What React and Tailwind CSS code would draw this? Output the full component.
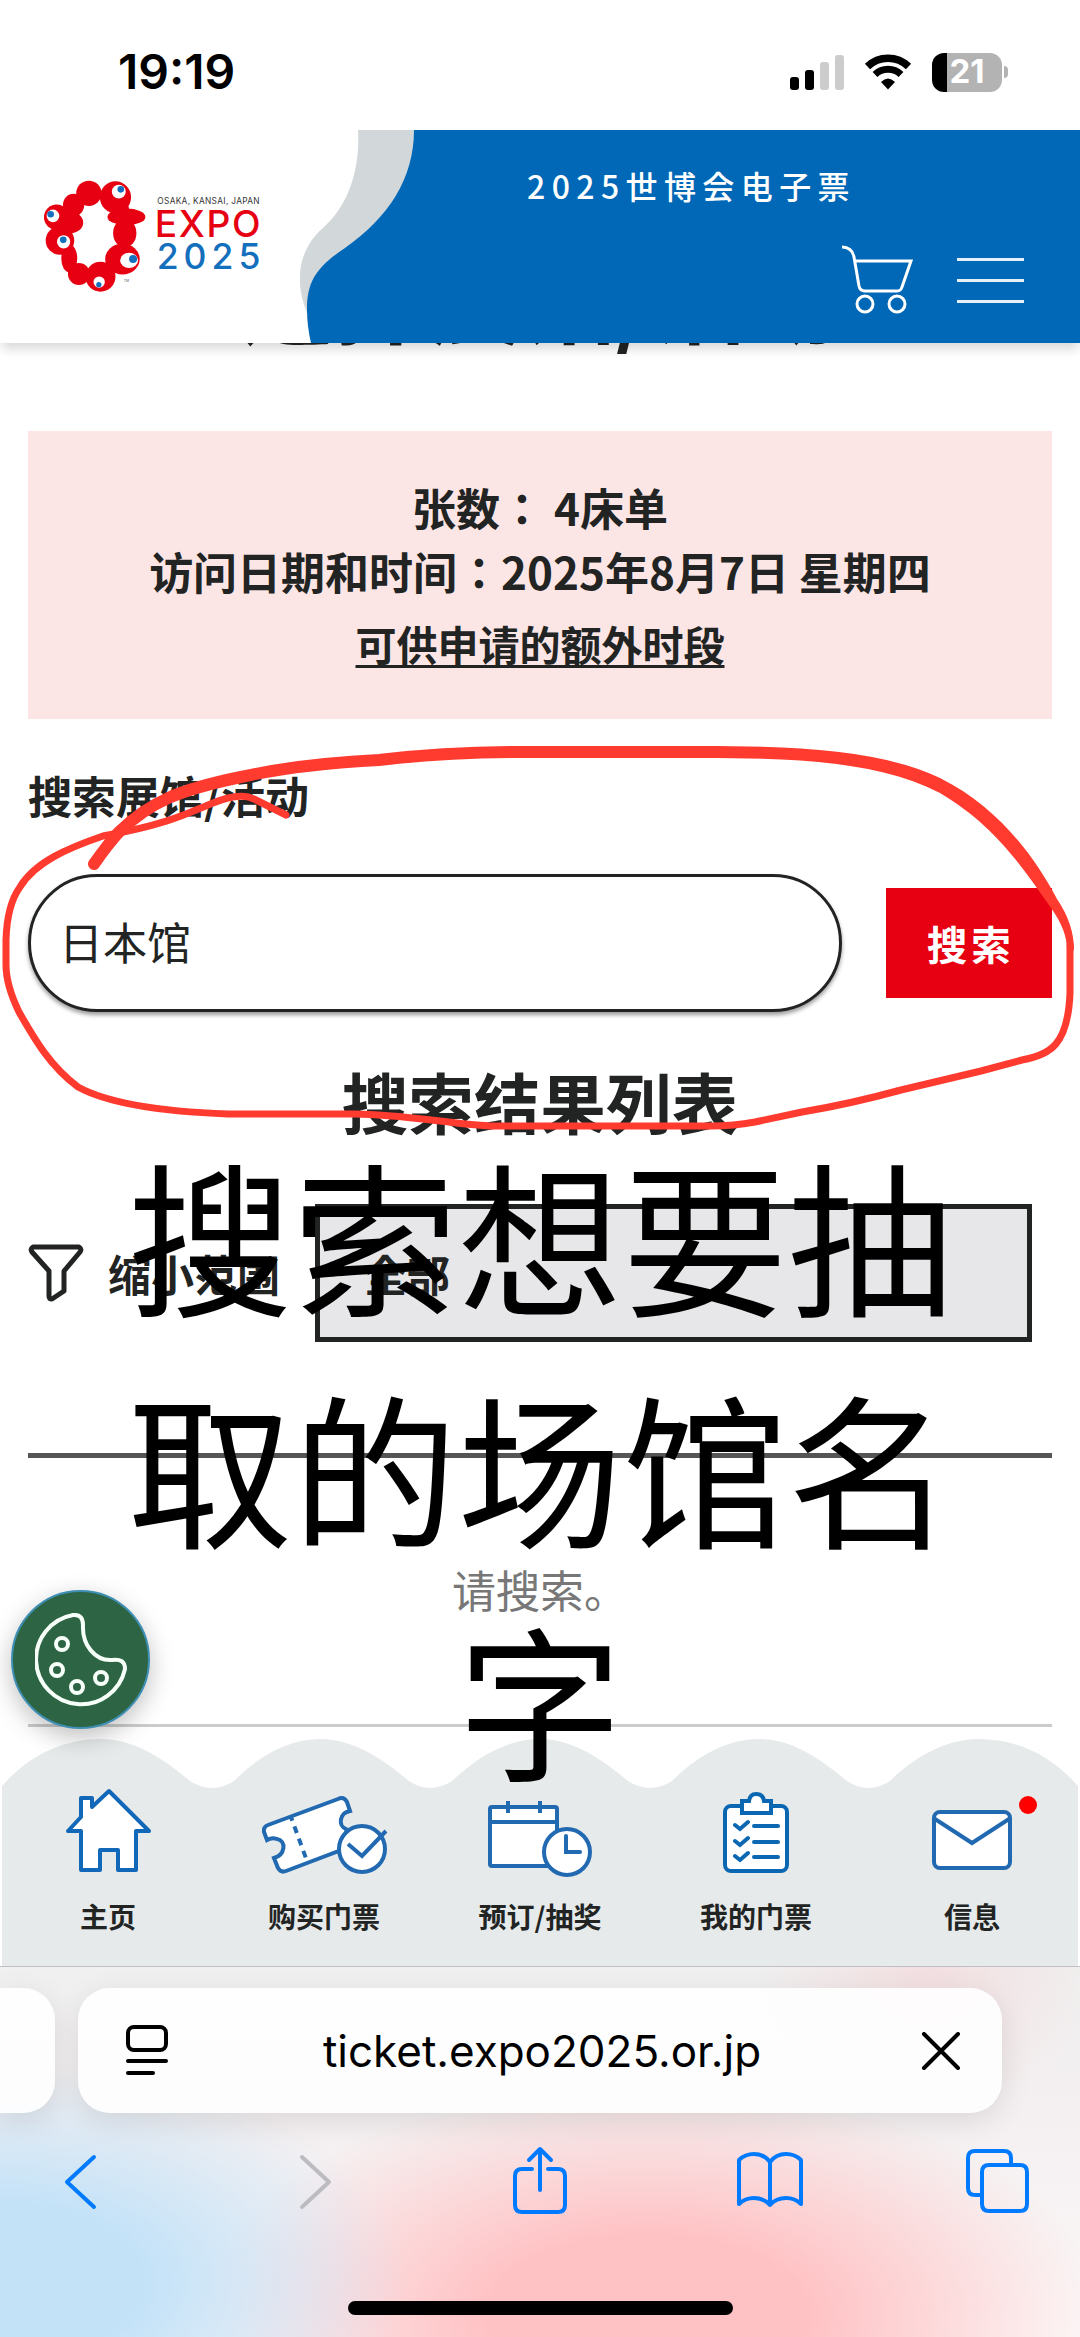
import React, { useState } from "react";

const Signal = () => (
  <svg width="54" height="35" viewBox="0 0 54 35" aria-hidden="true">
    <rect x="0" y="22" width="9" height="13" rx="3" fill="#000" />
    <rect x="15" y="15" width="9" height="20" rx="3" fill="#000" />
    <rect x="30" y="7" width="9" height="28" rx="3" fill="#ccc" />
    <rect x="45" y="0" width="9" height="35" rx="3" fill="#ccc" />
  </svg>
);

const Wifi = () => (
  <svg width="48" height="36" viewBox="0 0 48 36" fill="none" stroke="#000" aria-hidden="true">
    <path d="M3.5 12.5 A29.5 29.5 0 0 1 44.5 12.5" strokeWidth="7.5" />
    <path d="M11 20.5 A19 19 0 0 1 37 20.5" strokeWidth="7" />
    <path d="M24 35.5 L17 28 Q24 21 31 28 Z" fill="#000" stroke="none" />
  </svg>
);

const Logo = () => (
  <svg width="230" height="113" viewBox="40 30 690 340" role="img" aria-label="EXPO 2025">
    <g fill="#e60012">
      <circle cx="177" cy="70" r="38" />
      <ellipse cx="257" cy="82" rx="47" ry="48" />
      <ellipse cx="290" cy="141" rx="57" ry="25" />
      <ellipse cx="270" cy="120" rx="28" ry="26" />
      <ellipse cx="285" cy="190" rx="35" ry="43" />
      <ellipse cx="278" cy="268" rx="52" ry="46" />
      <circle cx="212" cy="321" r="45" />
      <circle cx="147" cy="313" r="33" />
      <ellipse cx="118" cy="266" rx="24" ry="42" />
      <circle cx="90" cy="212" r="43" />
      <circle cx="80" cy="142" r="38" />
      <ellipse cx="131" cy="105" rx="32" ry="34" />
      <ellipse cx="122" cy="158" rx="38" ry="32" />
    </g>
    <g fill="#fff">
      <circle cx="267" cy="65" r="21" />
      <circle cx="69" cy="138" r="19" />
      <circle cx="101" cy="216" r="20" />
      <ellipse cx="298" cy="272" rx="27" ry="23" />
      <circle cx="208" cy="337" r="17" />
    </g>
    <g fill="#1470bd">
      <circle cx="273" cy="58" r="10" />
      <circle cx="62" cy="133" r="10" />
      <circle cx="100" cy="210" r="10" />
      <circle cx="310" cy="268" r="12" />
      <circle cx="207" cy="345" r="8" />
    </g>
    <g fontFamily="Inter, sans-serif">
      <text x="383" y="102" fontSize="25" letterSpacing="1" fill="#333">OSAKA, KANSAI, JAPAN</text>
      <text x="375" y="201" fontSize="112" fontWeight="500" letterSpacing="5" fill="#e60012">EXPO</text>
      <text x="381" y="297" fontSize="107" fontWeight="500" letterSpacing="15" fill="#1470bd">2025</text>
      <text x="282" y="336" fontSize="10" fill="#555">TM</text>
    </g>
  </svg>
);

const HeaderWave = () => (
  <svg className="h-full w-[120px] shrink-0" viewBox="300 130 120 213" preserveAspectRatio="none" aria-hidden="true">
    <path d="M358 130 C360 160 353 202 323 228 C302 246 292 276 307 313 L340 313 L420 200 L420 130 Z" fill="#d2d7d9" />
    <path d="M414 130 C414 178 389 217 345 248 C318 266 307 280 307 309 Q307 326 311 343 L421 343 L421 130 Z" fill="#0068b7" />
  </svg>
);

const Cart = () => (
  <svg width="72" height="70" viewBox="0 0 72 70" fill="none" stroke="#fff" strokeWidth="3" aria-hidden="true">
    <path d="M1 2 Q11 2 13 12 L18 41 Q19 46 24 46 L56 46 Q60 46 61 42 L70 16 L14 16" />
    <circle cx="24" cy="59" r="8" />
    <circle cx="56" cy="59" r="8" />
  </svg>
);

const Home = () => (
  <svg width="130" height="90" viewBox="0 0 130 90" fill="#fff" stroke="#1168b8" strokeWidth="4" strokeLinejoin="round" aria-hidden="true">
    <path d="M66 4 L106 44 H93 V83 H75 V63 H57 V83 H38 V44 H25 L38 30 V11 H49 V20 Z" />
  </svg>
);

const Ticket = () => (
  <svg width="130" height="90" viewBox="0 0 130 90" fill="#fff" stroke="#2169b0" strokeWidth="4" aria-hidden="true">
    <path d="M9 38 L79 12 Q85 9 88 15 L91 24 C80 26 79 39 87 42 L92 62 L80 64 L27 84 Q22 86 19 81 L15 71 C26 68 28 54 18 52 Q13 50 8 53 L5 45 Q4 40 9 38 Z" />
    <path d="M32 30 L48 74" strokeDasharray="7 6" strokeDashoffset="3" />
    <circle cx="103" cy="62" r="23" />
    <path d="M89 57 L103 69 L127 44" fill="none" />
  </svg>
);

const Booking = () => (
  <svg width="130" height="90" viewBox="0 0 130 90" fill="#fff" stroke="#2169b0" strokeWidth="4" aria-hidden="true">
    <rect x="15" y="20" width="67" height="59" rx="2" />
    <path d="M15 35 H82 M33 14 V26 M65 14 V26" />
    <circle cx="92" cy="65" r="23" />
    <path d="M91 49 V65 H105" fill="none" strokeLinecap="round" />
  </svg>
);

const Clipboard = () => (
  <svg width="130" height="90" viewBox="0 0 130 90" fill="#fff" stroke="#0b67b2" strokeWidth="4" aria-hidden="true">
    <rect x="34" y="19" width="62" height="65" rx="6" />
    <path d="M51 26 V14 H58 Q59 7 65 7 Q72 7 73 14 H80 V26 Z" />
    <path d="M44 38 L49 42 L57 35 M44 54 L49 58 L57 51 M44 69 L49 73 L57 66 M63 39 H87 M63 55 H87 M63 70 H87" strokeLinecap="round" fill="none" />
  </svg>
);

const Mail = () => (
  <svg width="130" height="90" viewBox="0 0 130 90" fill="#fff" stroke="#2169b0" strokeWidth="4" aria-hidden="true">
    <rect x="27" y="25" width="76" height="56" rx="6" />
    <path d="M28 32 L65 56 L102 32" fill="none" />
  </svg>
);

const navItems = [
  { name: "主页", icon: <Home /> },
  { name: "购买门票", icon: <Ticket /> },
  { name: "预订/抽奖", icon: <Booking /> },
  { name: "我的门票", icon: <Clipboard /> },
  { name: "信息", icon: <Mail />, unread: true },
];

const toolItems = [
  { name: "返回", color: "text-[#007aff]", d: "M46 11 L19 36 L46 61" },
  { name: "前进", color: "text-[#bcbcc0]", d: "M24 11 L51 36 L24 61" },
  { name: "共享", color: "text-[#007aff]", d: "M25 23 H15 Q8 23 8 30 V59 Q8 66 15 66 H51 Q58 66 58 59 V30 Q58 23 51 23 H41 M33 44 V4 M22 14 L33 3 L44 14" },
  { name: "书签", color: "text-[#007aff]", d: "M33 16 Q27 8 17 8 Q8 8 2 14 V58 Q8 52 17 52 Q27 52 33 59 Q39 52 49 52 Q58 52 64 58 V14 Q58 8 49 8 Q39 8 33 16 V59" },
  { name: "标签页", color: "text-[#007aff]", d: "M16 49 H9 Q2 49 2 42 V12 Q2 5 9 5 H38 Q45 5 45 12 V19 M23 19 H54 Q61 19 61 26 V58 Q61 65 54 65 H23 Q16 65 16 58 V26 Q16 19 23 19 Z" },
];

export default function App() {
  const [keyword, setKeyword] = useState("日本馆");

  return (
    <div className="flex min-h-screen flex-col overflow-hidden bg-white font-['Noto_Sans_CJK_JP','Noto_Sans_CJK_SC',sans-serif] text-[#222424]">
      {/* STATUS BAR */}
      <div className="flex h-[130px] items-center justify-between pt-3.5 pr-[72px] pl-[118px] font-['Inter',sans-serif] text-black">
        <span className="text-[48px] font-semibold">19:19</span>
        <div className="flex items-center gap-5">
          <Signal />
          <Wifi />
          <div className="flex items-center gap-0.5">
            <div className="flex h-[39px] w-[70px] items-center justify-center rounded-xl bg-linear-to-r from-black from-22% to-[#b3b3b3] to-22% text-[33px] font-bold text-white">
              21
            </div>
            <div className="h-3 w-1 rounded-r-full bg-[#b3b3b3]" />
          </div>
        </div>
      </div>

      {/* SITE HEADER */}
      <header className="relative z-10 flex h-[213px] bg-white shadow-[0_8px_10px_-2px_rgba(0,0,0,0.15)]">
        <a href="#top" className="flex w-[300px] shrink-0 items-center pl-[43px]">
          <Logo />
        </a>
        <HeaderWave />
        <div className="flex flex-1 flex-col justify-between bg-[#0068b7] pr-14 pb-7">
          <p className="mt-8 pl-[107px] text-[32px] leading-[46px] font-medium tracking-[0.2em] text-white">2025世博会电子票</p>
          <div className="flex items-center justify-end gap-11">
            <button aria-label="购物车">
              <Cart />
            </button>
            <button aria-label="菜单" className="flex w-[67px] flex-col gap-[18px]">
              <span className="h-[3px] bg-white/90" />
              <span className="h-[3px] bg-white/90" />
              <span className="h-[3px] bg-white/90" />
            </button>
          </div>
        </div>
      </header>

      {/* PAGE CONTENT */}
      <main className="relative px-7 pb-3">
        <h1 className="mt-[-94px] text-center text-[94px] leading-none font-bold">选择展馆/活动</h1>

        <section className="mt-22 bg-[#fce6e5] py-11 text-center text-[44px] leading-[64px] font-bold">
          <p>张数： 4床单</p>
          <p>访问日期和时间：2025年8月7日 星期四</p>
          <a href="#slots" className="mt-2 block text-[41px] underline decoration-3 underline-offset-4">
            可供申请的额外时段
          </a>
        </section>

        <form onSubmit={(e) => e.preventDefault()}>
          <label htmlFor="keyword" className="mt-11 block text-[44px] leading-[64px] font-bold">
            搜索展馆/活动
          </label>
          <div className="mt-[47px] flex items-center gap-11">
            <input
              id="keyword"
              type="text"
              value={keyword}
              onChange={(e) => setKeyword(e.target.value)}
              className="h-[138px] min-w-0 flex-1 rounded-full border-3 border-[#222424] bg-white px-7 pb-1 text-[44px] shadow-[0_3px_4px_rgba(0,0,0,0.4)] outline-none"
            />
            <button className="h-[110px] w-[166px] bg-[#e60012] pl-1 text-[40px] font-bold tracking-widest text-white">搜索</button>
          </div>
        </form>

        <h2 className="mt-12 text-center text-[66px] leading-[80px] font-bold">搜索结果列表</h2>

        <div className="mt-16 flex items-center pr-5 text-[43px] font-bold">
          <svg width="56" height="58" viewBox="0 0 56 58" fill="none" stroke="#222424" strokeWidth="5" strokeLinejoin="round" aria-hidden="true">
            <path d="M5 3 H51 Q54 5 52 8 L36 27 V47 L24 55 Q21 55 21 52 V27 L4 8 Q2 5 5 3 Z" />
          </svg>
          <label htmlFor="range" className="ml-6 w-[207px]">
            缩小范围
          </label>
          <select id="range" className="h-[138px] flex-1 appearance-none border-5 border-[#222424] bg-[#e7e7e9] px-11 outline-none">
            <option>全部</option>
          </select>
        </div>

        <hr className="mt-[111px] border-t-5 border-[#555]" />
        <p className="mt-[99px] text-center text-[44px] leading-[64px] text-[#777]">请搜索。</p>
        <hr className="mt-[103px] border-t-3 border-[#ccc]" />

        <button
          aria-label="Cookie"
          className="absolute bottom-[10px] left-[11px] z-10 flex size-[139px] items-center justify-center rounded-full border-2 border-[#3f8fb5] bg-[#2d6544] shadow-[0_8px_24px_rgba(0,0,0,0.25)]"
        >
          <svg width="92" height="94" viewBox="0 0 92 94" fill="none" stroke="#f6fff8" strokeWidth="4" aria-hidden="true">
            <path d="M38 2 Q48 1 48 12 C47 32 60 48 77 47 Q90 45 90 56 A45 45 0 1 1 38 2 Z" />
            <circle cx="27" cy="31" r="6" />
            <circle cx="22" cy="57" r="6" />
            <circle cx="42" cy="74" r="6" />
            <circle cx="66" cy="65" r="6" />
          </svg>
        </button>

        {/* hand-drawn circle round the search box */}
        <svg className="pointer-events-none absolute inset-x-0 top-0 z-20 w-full" viewBox="0 343 1080 800" fill="none" stroke="#ff3b30" strokeLinecap="round" strokeLinejoin="round" aria-hidden="true">
          <path d="M94 864 Q108 844 119 832 C150 802 178 790 241 777 C290 766 340 762 379 760 C430 754 470 752 520 752 L700 752" strokeWidth="12" />
          <path d="M700 746 C800 746 880 750 940 778 C1000 808 1035 858 1057 899 Q1074 924 1074 950 L1067 950 Q1067 930 1051 908 C1020 864 995 826 940 793 C880 762 800 758 700 758 Z" fill="#ff3b30" stroke="none" />
          <path d="M1070 945 V993 C1068 1045 1050 1055 1022 1060 L981 1071 L901 1090 Q850 1104 802 1112 L755 1122 Q733 1126 712 1126 H490 C450 1124 400 1114 355 1114 H228 Q120 1110 78 1087 C50 1066 35 1040 19 1012 Q6 985 6 965 V940 Q7 905 20 887 C35 862 68 848 103 836 C170 824 190 812 213 803 Q241 791 256 800 L286 815" strokeWidth="7" />
        </svg>

        {/* caption laid over the page */}
        <p className="pointer-events-none absolute inset-x-0 top-[774px] z-20 mx-auto w-[840px] text-center font-['Noto_Sans_CJK_SC',sans-serif] text-[165px] leading-[232px] text-black">
          搜索想要抽取的场馆名字
        </p>
      </main>

      {/* BOTTOM NAVIGATION */}
      <nav className="relative flex pt-12 pb-9">
        <svg className="absolute inset-0 h-full w-full" viewBox="0 0 1080 227" preserveAspectRatio="none" aria-hidden="true">
          <path
            d="M2 227 V47 C30 15 65 0 101 0 C138 0 168 24 190 42 Q212 56 234 42 C256 20 286 0 320 0 C357 0 387 24 409 42 Q430 56 452 42 C475 20 505 0 540 0 C576 0 606 24 628 42 Q650 56 672 42 C694 20 724 0 759 0 C795 0 825 24 847 42 Q868 56 890 42 C912 20 944 0 979 0 C1015 0 1050 15 1078 47 V227 Z"
            fill="#e6eaea"
          />
        </svg>
        {navItems.map((item) => (
          <a key={item.name} href="#nav" className="relative flex flex-1 flex-col items-center gap-[25px] text-[28px] leading-7 font-bold">
            <span className="relative">
              {item.icon}
              {item.unread && <span className="absolute top-[9px] right-0 size-[18px] rounded-full bg-[#ff0000]" />}
            </span>
            {item.name}
          </a>
        ))}
      </nav>

      {/* BROWSER BAR */}
      <footer className="flex flex-1 flex-col border-t border-[#bfbfc2] bg-[radial-gradient(ellipse_38%_60%_at_0%_85%,#c3e2f8_35%,transparent_100%),radial-gradient(ellipse_42%_62%_at_60%_94%,#ffc2c4_35%,transparent_100%),radial-gradient(ellipse_16%_40%_at_86%_0%,#f3dfe1_0%,transparent_100%),linear-gradient(#f0f0f0,#f4eff0_40%,#fcf8f8)]">
        <div className="mt-[21px] flex h-[125px] gap-[23px] pr-[78px]">
          <div className="w-[55px] rounded-r-[32px] bg-white/90 shadow-[0_8px_30px_rgba(0,0,0,0.1)]" />
          <div className="flex flex-1 items-center justify-between rounded-[32px] bg-white/90 pr-10 pl-12 shadow-[0_8px_30px_rgba(0,0,0,0.1)]">
            <button aria-label="页面菜单">
              <svg width="42" height="52" viewBox="0 0 42 52" fill="none" stroke="#000" strokeWidth="4" strokeLinecap="round" aria-hidden="true">
                <rect x="2" y="2" width="38" height="23" rx="6" />
                <path d="M2 36 H40 M2 48 H27" />
              </svg>
            </button>
            <button className="pr-1 font-['Inter',sans-serif] text-[44px] text-black">ticket.expo2025.or.jp</button>
            <button aria-label="停止">
              <svg width="42" height="38" viewBox="0 0 42 38" stroke="#000" strokeWidth="4" strokeLinecap="round" aria-hidden="true">
                <path d="M4 2 L38 36 M38 2 L4 36" />
              </svg>
            </button>
          </div>
        </div>
        <div className="mt-[33px] flex justify-between px-12">
          {toolItems.map((tool) => (
            <button key={tool.name} aria-label={tool.name} className={tool.color}>
              <svg width="66" height="70" viewBox="0 0 66 70" fill="none" stroke="currentColor" strokeWidth="4" strokeLinecap="round" strokeLinejoin="round" aria-hidden="true">
                <path d={tool.d} />
              </svg>
            </button>
          ))}
        </div>
        <div className="mx-auto mt-auto mb-[22px] h-3.5 w-[385px] rounded-full bg-black" />
      </footer>
    </div>
  );
}
